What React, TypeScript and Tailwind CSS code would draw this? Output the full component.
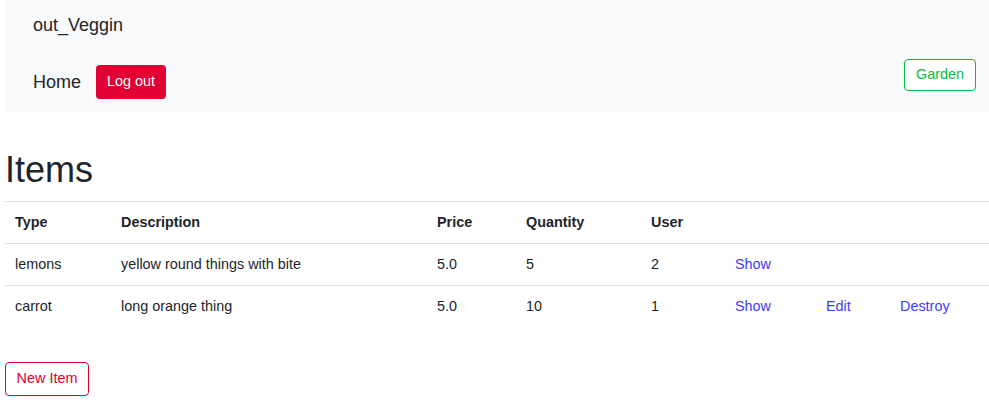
import React from "react";

const rows = [
  { type: "lemons", desc: "yellow round things with bite", price: "5.0", qty: "5", user: "2", edit: false },
  { type: "carrot", desc: "long orange thing", price: "5.0", qty: "10", user: "1", edit: true },
];

export default function App() {
  return (
    <div className="min-h-[409px] bg-white pl-[5px] text-[#212529] [font-family:'Liberation_Sans',Arial,sans-serif]">
      <nav className="flex h-[112px] flex-col bg-[#f8f9fa] pl-[28px] pr-[13px]">
        <div className="flex h-[50px] items-center">
          <span className="text-[18px] leading-none">out_Veggin</span>
        </div>
        <div className="flex items-start justify-between">
          <div className="mt-[15px] flex items-center gap-[15px]">
            <span className="text-[18px] leading-none">Home</span>
            <button className="h-[34px] rounded-[4px] bg-[#e00033] px-[11px] text-[14.4px] text-white">
              Log out
            </button>
          </div>
          <button className="mt-[9px] h-[32px] w-[72px] rounded-[4px] border border-[#00c040] bg-white text-[14.4px] text-[#00c040]">
            Garden
          </button>
        </div>
      </nav>

      <h1 className="mt-[36px] mb-[10px] text-[36px] leading-[1.2] font-normal">Items</h1>

      <table className="w-full border-collapse text-left text-[14.4px]">
        <thead>
          <tr className="h-[42px] border-y border-[#dee2e6]">
            <th className="w-[106px] px-[10px] font-bold">Type</th>
            <th className="w-[316px] px-[10px] font-bold">Description</th>
            <th className="w-[89px] px-[10px] font-bold">Price</th>
            <th className="w-[125px] px-[10px] font-bold">Quantity</th>
            <th className="w-[84px] px-[10px] font-bold">User</th>
            <th className="w-[91px] px-[10px]"></th>
            <th className="w-[74px] px-[10px]"></th>
            <th className="px-[10px]"></th>
          </tr>
        </thead>
        <tbody>
          {rows.map((r, i) => (
            <tr key={r.type} className={`h-[42px] ${i > 0 ? "border-t border-[#dee2e6]" : ""}`}>
              <td className="px-[10px]">{r.type}</td>
              <td className="px-[10px]">{r.desc}</td>
              <td className="px-[10px]">{r.price}</td>
              <td className="px-[10px]">{r.qty}</td>
              <td className="px-[10px]">{r.user}</td>
              <td className="px-[10px] text-[#3b3bff]">Show</td>
              <td className="px-[10px] text-[#3b3bff]">{r.edit ? "Edit" : ""}</td>
              <td className="px-[10px] text-[#3b3bff]">{r.edit ? "Destroy" : ""}</td>
            </tr>
          ))}
        </tbody>
      </table>

      <button className="mt-[34px] h-[34px] w-[84px] rounded-[4px] border border-[#e00033] bg-white text-[14.4px] text-[#e00033]">
        New Item
      </button>
    </div>
  );
}
